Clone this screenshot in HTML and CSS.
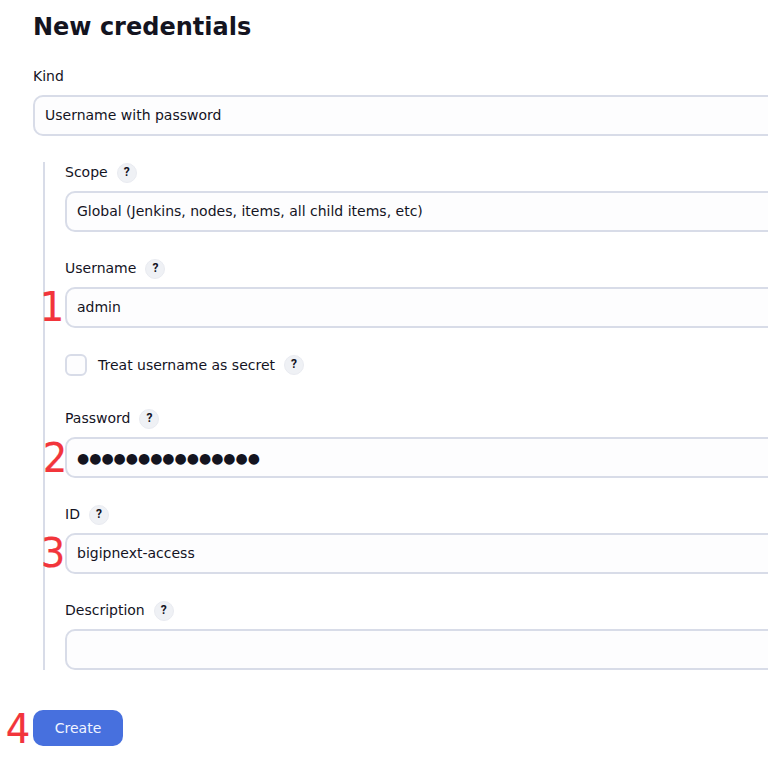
FILE: index.html
```html
<!DOCTYPE html>
<html lang="en">
<head>
<meta charset="utf-8">
<title>New credentials</title>
<link rel="stylesheet" href="styles.css">
</head>
<body>
<main class="page">
  <h1 class="title">New credentials</h1>
  <div class="label">Kind</div>
  <div class="input">Username with password</div>
  <section class="group">
    <div class="field">
      <div class="label">Scope <span class="help">?</span></div>
      <div class="input">Global (Jenkins, nodes, items, all child items, etc)</div>
    </div>
    <div class="field">
      <div class="label">Username <span class="help">?</span></div>
      <div class="input">admin<span class="step step-1">1</span></div>
    </div>
    <div class="check"><span class="box"></span><span class="check-text">Treat username as secret</span><span class="help">?</span></div>
    <div class="field">
      <div class="label">Password <span class="help">?</span></div>
      <div class="input dots">●●●●●●●●●●●●●●●<span class="step step-2">2</span></div>
    </div>
    <div class="field">
      <div class="label">ID <span class="help">?</span></div>
      <div class="input">bigipnext-access<span class="step step-3">3</span></div>
    </div>
    <div class="field">
      <div class="label">Description <span class="help">?</span></div>
      <div class="input"></div>
    </div>
  </section>
  <div class="actions"><button class="create">Create</button><span class="step step-4">4</span></div>
</main>
</body>
</html>
```
FILE: styles.css
```css
* { box-sizing: border-box; }
body {
  margin: 0;
  height: 773px;
  overflow: hidden;
  background: #fff;
  color: #14141f;
  font: 14px/20px "DejaVu Sans", sans-serif;
}
.page { padding: 11px 0 0 33px; width: 800px; }
.title { margin: 0 0 23px; font-size: 24px; line-height: 32px; font-weight: 700; }
.label {
  display: flex;
  align-items: center;
  gap: 9px;
  height: 20px;
  margin-bottom: 9px;
}
.help {
  width: 20px;
  height: 20px;
  border: 1px solid #e9ebf1;
  border-radius: 50%;
  background: #eff1f5;
  font: 700 12px/17px Roboto, sans-serif;
  text-align: center;
}
.label .help { margin-top: 2px; }
.input {
  position: relative;
  height: 41px;
  padding: 8px 10px;
  border: 2px solid #d8dce8;
  border-radius: 10px;
  background: #fdfdfe;
}
.group {
  margin: 26px 0 0 10px;
  padding-left: 20px;
  border-left: 2px solid #d8dce8;
  height: 508px;
}
.field { height: 96px; }
.check { display: flex; align-items: center; height: 22px; margin-bottom: 32px; }
.box { width: 22px; height: 22px; margin-right: 11px; border: 2px solid #d8dce8; border-radius: 6px; background: #fdfdfe; }
.check-text { margin-right: 9px; }
.dots { font-size: 14px; letter-spacing: -0.02px; padding-top: 9px; }
.actions { position: relative; margin-top: 40px; }
.create {
  display: block;
  width: 90px;
  height: 36px;
  border: 0;
  border-radius: 10px;
  background: #4770de;
  color: #f0f4ff;
  font: 14px/20px "DejaVu Sans", sans-serif;
}
.step {
  position: absolute;
  color: #f2353b;
  font: 41px/48px "DejaVu Sans", sans-serif;
  -webkit-text-stroke: 0.2px #f2353b;
  transform: scaleX(0.94);
}
.step-1 { left: -28px; top: -6px; }
.step-2 { left: -25px; top: -5px; }
.step-3 { left: -27px; top: -6px; }
.step-4 { left: -28px; top: -5px; }
```
